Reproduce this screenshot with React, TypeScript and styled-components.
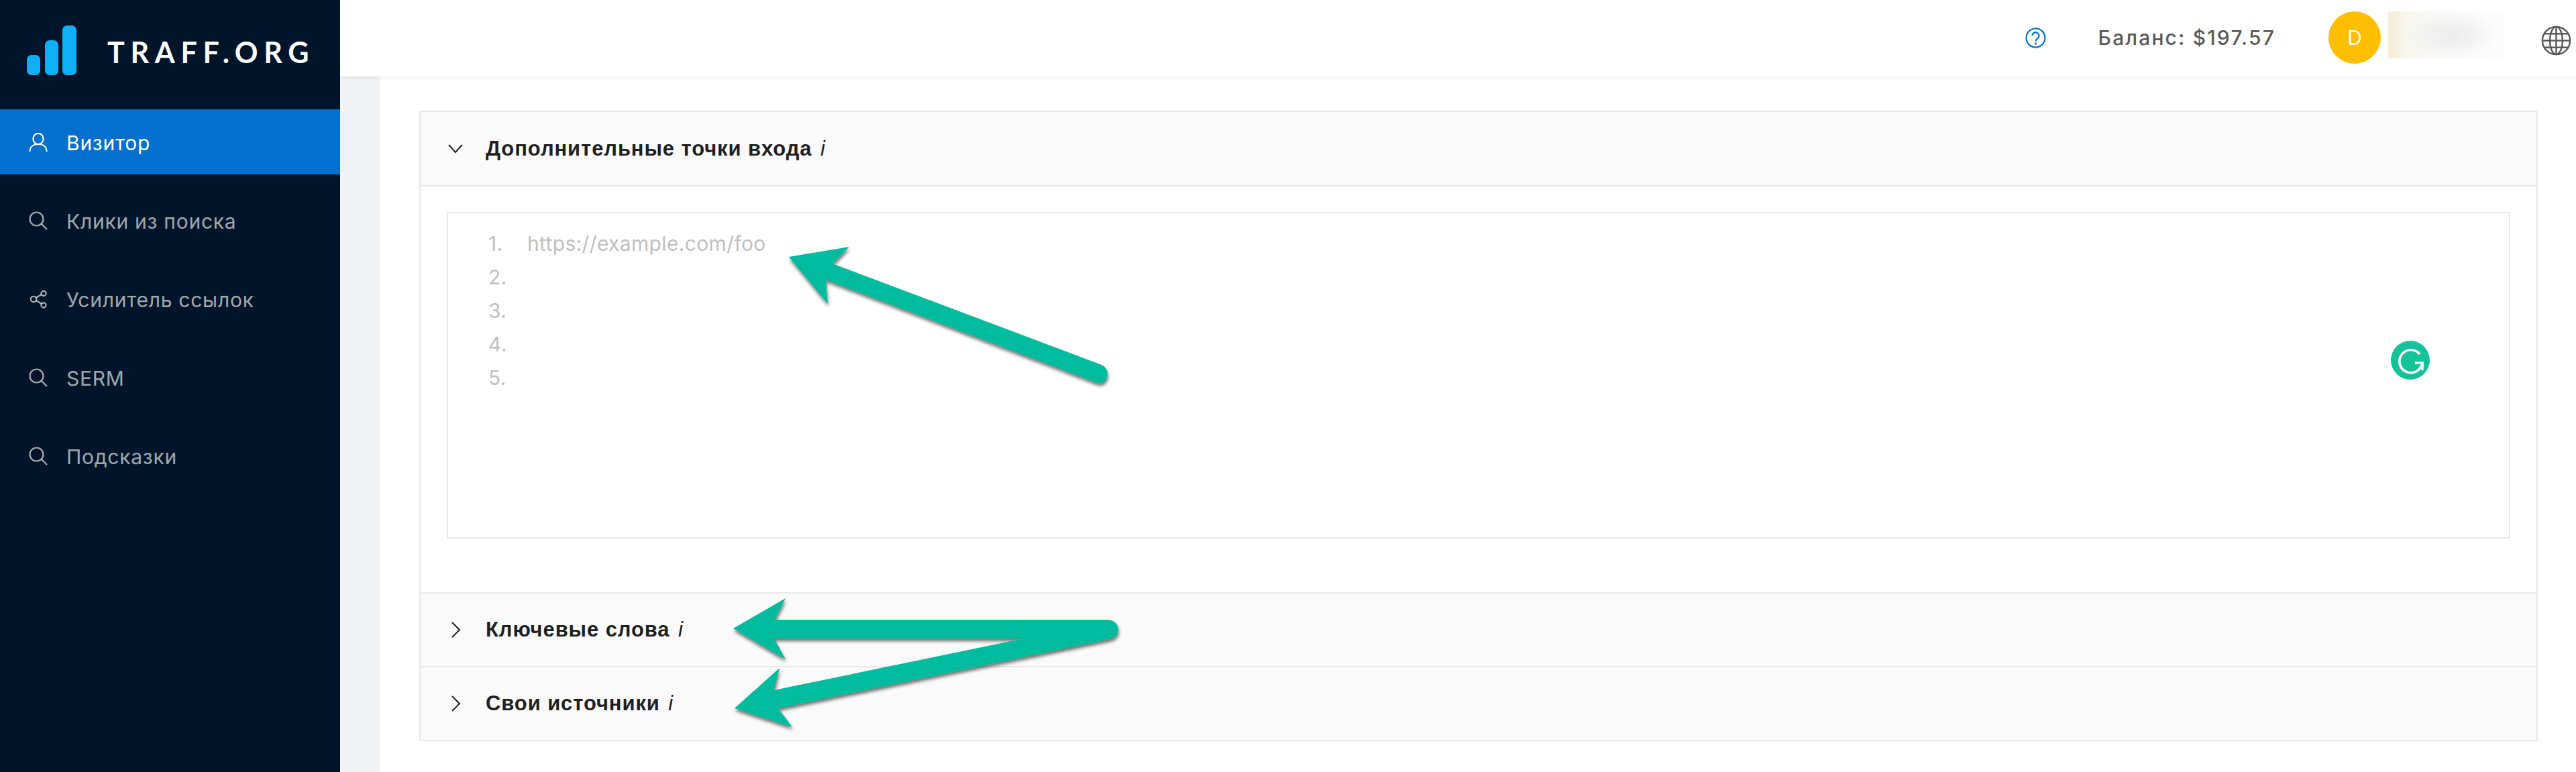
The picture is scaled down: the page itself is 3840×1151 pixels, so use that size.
import React from "react";
import styled, { createGlobalStyle } from "styled-components";

const Global = createGlobalStyle`
  html, body { margin: 0; padding: 0; background: #fff; }
  * { box-sizing: border-box; }
  body { font-family: Inter, "Liberation Sans", sans-serif; }
`;

const Page = styled.div`
  position: relative;
  display: flex;
  width: 3840px;
  height: 1151px;
  overflow: hidden;
`;

const Sidebar = styled.aside`
  flex: 0 0 507px;
  background: #001529;
  display: flex;
  flex-direction: column;
`;

const Brand = styled.div`
  height: 163px;
  padding: 38px 0 0 40px;
  display: flex;
  align-items: flex-start;
`;

const LogoBars = styled.svg`
  width: 74px;
  height: 74px;
  flex: none;
`;

const BrandName = styled.div`
  margin: 15px 0 0 46px;
  font-family: Lato, sans-serif;
  font-size: 43px;
  line-height: 50px;
  font-weight: 700;
  letter-spacing: 8.7px;
  color: #fff;
  white-space: nowrap;
`;

const Menu = styled.nav`
  display: flex;
  flex-direction: column;
  gap: 20px;
`;

const MenuItem = styled.div<{ $active?: boolean }>`
  height: 97px;
  padding: 3px 0 0 43px;
  display: flex;
  align-items: center;
  gap: 28px;
  font-size: 30px;
  font-weight: 400;
  letter-spacing: 0.75px;
  color: ${(p) => (p.$active ? "#fff" : "rgba(255,255,255,0.65)")};
  background: ${(p) => (p.$active ? "#0270cc" : "transparent")};
  svg { flex: none; margin-top: -3px; }
`;

const MenuIcon = styled.svg`
  width: 28px;
  height: 28px;
  fill: none;
  stroke: currentColor;
  stroke-width: 2.2;
`;

const Main = styled.div`
  flex: 1;
  display: flex;
  flex-direction: column;
  background: #f0f2f5;
`;

const Header = styled.header`
  position: relative;
  height: 114px;
  background: #fff;
  box-shadow: 0 2px 8px rgba(0, 21, 41, 0.07);
  display: flex;
  align-items: center;
  justify-content: flex-end;
  padding-right: 7px;
`;

const Help = styled.svg`
  width: 31px;
  height: 31px;
  flex: none;
  margin-right: 78px;
  margin-top: -2px;
`;

const Balance = styled.span`
  font-size: 30px;
  font-weight: 500;
  color: #595959;
  letter-spacing: 2.2px;
  margin-right: 79px;
  margin-top: -2px;
`;

const Avatar = styled.span`
  width: 78px;
  height: 78px;
  border-radius: 50%;
  background: #ffbf00;
  color: #fff;
  font-size: 30px;
  display: flex;
  align-items: center;
  justify-content: center;
  margin-right: 10px;
  margin-top: -2px;
`;

const BlurredName = styled.span`
  width: 174px;
  height: 70px;
  margin-top: -10px;
  margin-right: 55px;
  border-radius: 4px;
  background:
    radial-gradient(ellipse 70px 34px at 55% 50%, #ececec 0%, rgba(240, 240, 240, 0.6) 60%, rgba(250, 250, 250, 0) 100%),
    linear-gradient(90deg, #f8eed6 0%, #f8f6f0 18%, #f9f9f9 60%, #fdfdfd 100%);
`;

const GlobeIcon = styled.svg`
  width: 45px;
  height: 45px;
  flex: none;
  margin-top: 6px;
  color: #595959;
`;

const Content = styled.div`
  flex: 1;
  margin-left: 59px;
  background: #fff;
  padding: 51px 57px 0 59px;
`;

const Collapse = styled.section`
  border: 2px solid #e8e8e8;
`;

const PanelHead = styled.div<{ $first?: boolean }>`
  height: ${(p) => (p.$first ? 109 : 110)}px;
  background: #fafafa;
  display: flex;
  align-items: center;
  padding-left: 41px;
  gap: 34px;
  font-family: "Liberation Sans", Arial, sans-serif;
  font-size: 31px;
  font-weight: 700;
  letter-spacing: 0.9px;
  color: #1f1f1f;
  border-top: ${(p) => (p.$first ? "0" : "2px solid #e8e8e8")};
  svg { flex: none; color: #1f1f1f; }
  em { font-weight: 400; margin-left: 3px; }
`;

const PanelBody = styled.div`
  border-top: 2px solid #e8e8e8;
  padding: 38px 39px 80px 39px;
`;

const Editor = styled.div`
  position: relative;
  height: 487px;
  border: 2px solid #e8e8e8;
  padding: 20px 0 0 60px;
  font-size: 30px;
  line-height: 50px;
  letter-spacing: 0.35px;
  color: #bfbfbf;
`;

const Line = styled.div`
  display: flex;
`;

const LineNo = styled.span`
  width: 58px;
`;

const Grammarly = styled.svg`
  position: absolute;
  left: 2896px;
  top: 190px;
  width: 58px;
  height: 58px;
`;

const Arrows = styled.svg`
  position: absolute;
  left: 0;
  top: 0;
  width: 3840px;
  height: 1151px;
  pointer-events: none;
`;

const SearchGlyph = () => (
  <MenuIcon viewBox="0 0 28 28">
    <circle cx="11.5" cy="11.5" r="10" />
    <path d="M18.5 18.5L27 27" />
  </MenuIcon>
);

const ShareGlyph = () => (
  <MenuIcon viewBox="0 0 28 28">
    <circle cx="7" cy="14" r="4.2" />
    <circle cx="22" cy="5.5" r="3.6" />
    <circle cx="22" cy="23" r="3.6" />
    <path d="M10.8 11.8L19 7M10.8 16.2L19 21" />
  </MenuIcon>
);

const UserGlyph = () => (
  <MenuIcon viewBox="0 0 28 28">
    <ellipse cx="14" cy="9" rx="7.6" ry="8" />
    <path d="M1.5 28C1.5 21 6.5 17 14 17S26.5 21 26.5 28" />
  </MenuIcon>
);

const items = [
  { label: "Клики из поиска", icon: "search" },
  { label: "Усилитель ссылок", icon: "share" },
  { label: "SERM", icon: "search" },
  { label: "Подсказки", icon: "search" },
];

export default function App() {
  return (
    <Page>
      <Global />
      <Sidebar>
        <Brand>
          <LogoBars viewBox="0 0 74 74">
            <rect x="0" y="44" width="20" height="30" rx="7" fill="#0cb0f4" />
            <rect x="27" y="22" width="20" height="52" rx="7" fill="#0cb0f4" />
            <rect x="53" y="0" width="21" height="74" rx="7" fill="#0cb0f4" />
          </LogoBars>
          <BrandName>TRAFF.ORG</BrandName>
        </Brand>
        <Menu>
          <MenuItem $active>
            <UserGlyph />
            Визитор
          </MenuItem>
          {items.map((it) => (
            <MenuItem key={it.label}>
              {it.icon === "share" ? <ShareGlyph /> : <SearchGlyph />}
              {it.label}
            </MenuItem>
          ))}
        </Menu>
      </Sidebar>
      <Main>
        <Header>
          <Help viewBox="0 0 31 31" fill="none" stroke="#0270cc" strokeWidth="2.2">
            <circle cx="15.5" cy="15.5" r="14" />
            <path d="M10.5 12.2a5 5 0 1 1 7.8 4.2c-1.7 1.1-2.8 2-2.8 4" />
            <circle cx="15.5" cy="24" r="0.6" />
          </Help>
          <Balance>Баланс: $197.57</Balance>
          <Avatar>D</Avatar>
          <BlurredName />
          <GlobeIcon viewBox="0 0 24 24" fill="none" stroke="currentColor" strokeWidth="1.3">
            <circle cx="12" cy="12" r="11" />
            <ellipse cx="12" cy="12" rx="5" ry="11" />
            <path d="M12 1v22M1 12h22M2.6 6.5h18.8M2.6 17.5h18.8" />
          </GlobeIcon>
        </Header>
        <Content>
          <Collapse>
            <PanelHead $first>
              <svg width="22" height="14" viewBox="0 0 22 14" fill="none" stroke="currentColor" strokeWidth="2">
                <path d="M1 1l10 11L21 1" />
              </svg>
              <span>
                Дополнительные точки входа <em>i</em>
              </span>
            </PanelHead>
            <PanelBody>
              <Editor>
                {["1.", "2.", "3.", "4.", "5."].map((n, i) => (
                  <Line key={n}>
                    <LineNo>{n}</LineNo>
                    {i === 0 && <span>https://example.com/foo</span>}
                  </Line>
                ))}
                <Grammarly viewBox="0 0 58 58">
                  <circle cx="29" cy="29" r="29" fill="#15c39a" />
                  <path d="M43 20a17 17 0 1 0 3 16" fill="none" stroke="#fff" strokeWidth="3.6" />
                  <path d="M36 33h11v11" fill="none" stroke="#fff" strokeWidth="3.6" />
                </Grammarly>
              </Editor>
            </PanelBody>
            <PanelHead>
              <svg width="22" height="24" viewBox="0 0 22 24" fill="none" stroke="currentColor" strokeWidth="2">
                <path d="M6 1l11 11L6 23" />
              </svg>
              <span>
                Ключевые слова <em>i</em>
              </span>
            </PanelHead>
            <PanelHead>
              <svg width="22" height="24" viewBox="0 0 22 24" fill="none" stroke="currentColor" strokeWidth="2">
                <path d="M6 1l11 11L6 23" />
              </svg>
              <span>
                Свои источники <em>i</em>
              </span>
            </PanelHead>
          </Collapse>
        </Content>
      </Main>
      <Arrows viewBox="0 0 3840 1151">
        <defs>
          <filter id="sh" x="-10%" y="-20%" width="120%" height="140%">
            <feDropShadow dx="1" dy="4" stdDeviation="2.5" floodColor="#000" floodOpacity="0.55" />
          </filter>
        </defs>
        <g fill="#00bb9e" filter="url(#sh)">
          <path d="M1176 383 L1266 368 L1241 393 L1642 544 Q1652 549 1651 560 Q1648 573 1636 571 L1231 417 L1234 453 Z" />
          <path d="M1093 937 L1171 892 L1155 924 L1652 924 Q1667 926 1667 940 Q1666 950 1654 953 L1160 1056 L1181 1084 L1095 1056 L1162 996 L1154 1029 L1526 952 L1154 952 L1171 983 Z" />
        </g>
      </Arrows>
    </Page>
  );
}
